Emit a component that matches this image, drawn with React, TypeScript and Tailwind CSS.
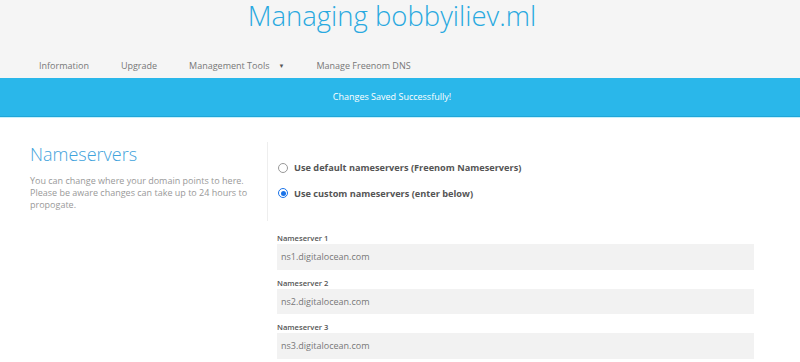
const navItems = ['Information', 'Upgrade', 'Management Tools', 'Manage Freenom DNS']

const nameservers = ['ns1.digitalocean.com', 'ns2.digitalocean.com', 'ns3.digitalocean.com']

function Radio({ checked }: { checked?: boolean }) {
  return (
    <span
      className={`flex h-[10px] w-[10px] shrink-0 items-center justify-center rounded-full border ${
        checked ? 'border-[#1a73e8] bg-white' : 'border-[#999] bg-white'
      }`}
    >
      {checked && <span className="h-[5px] w-[5px] rounded-full bg-[#1a73e8]" />}
    </span>
  )
}

export default function App() {
  return (
    <div className="min-h-[362px] w-[800px] overflow-hidden bg-white font-['Open_Sans',sans-serif]">
      {/* Header */}
      <div className="flex h-[78px] flex-col bg-[#f5f5f5]">
        <div className="w-[784px] pt-[1px]">
          <h1 className="text-center text-[27.5px] font-light leading-[30px] text-[#29a9e0]">
            Managing bobbyiliev.ml
          </h1>
          <nav className="mt-[28px] flex items-center gap-[32px] pl-[39px] text-[9px] leading-[14px] text-[#777]">
            {navItems.map((item) => (
              <span key={item} className="flex items-center gap-[9px]">
                {item}
                {item === 'Management Tools' && <span className="text-[6px] text-[#555]">▼</span>}
              </span>
            ))}
          </nav>
        </div>
      </div>

      {/* Success banner */}
      <div className="h-[39px] border-b-[1px] border-[#1fa6d8] bg-[#2ab7ea]">
        <div className="flex h-full w-[784px] items-center justify-center text-[9px] text-white">
          Changes Saved Successfully!
        </div>
      </div>
      <div className="h-px bg-[#c8f0fb]" />

      {/* Content */}
      <div className="flex w-[784px] px-[30px] pt-[24px]">
        <div className="w-[238px] shrink-0 border-r border-[#eee] pr-[10px] pb-[10px]">
          <h2 className="text-[18px] font-light leading-[24px] text-[#3fa3dc]">Nameservers</h2>
          <p className="mt-[9px] text-[9px] leading-[12px] text-[#999]">
            You can change where your domain points to here. Please be aware changes can take up to 24 hours to
            propogate.
          </p>
        </div>
        <div className="flex flex-col gap-[12.5px] pl-[10px] pt-[19px]">
          <label className="flex items-center gap-[6px] text-[9.2px] font-bold leading-[13px] text-[#555]">
            <Radio />
            Use default nameservers (Freenom Nameservers)
          </label>
          <label className="flex items-center gap-[6px] text-[9.2px] font-bold leading-[13px] text-[#555]">
            <Radio checked />
            Use custom nameservers (enter below)
          </label>
        </div>
      </div>

      <div className="ml-[277px] mt-[12px] flex w-[477px] flex-col gap-[8px]">
        {nameservers.map((ns, i) => (
          <div key={ns}>
            <div className="text-[7.6px] font-semibold leading-[11px] text-[#555]">Nameserver {i + 1}</div>
            <div className="flex h-[25.5px] items-center bg-[#f2f2f2] px-[4px] text-[9px] text-[#777]">{ns}</div>
          </div>
        ))}
      </div>
    </div>
  )
}
